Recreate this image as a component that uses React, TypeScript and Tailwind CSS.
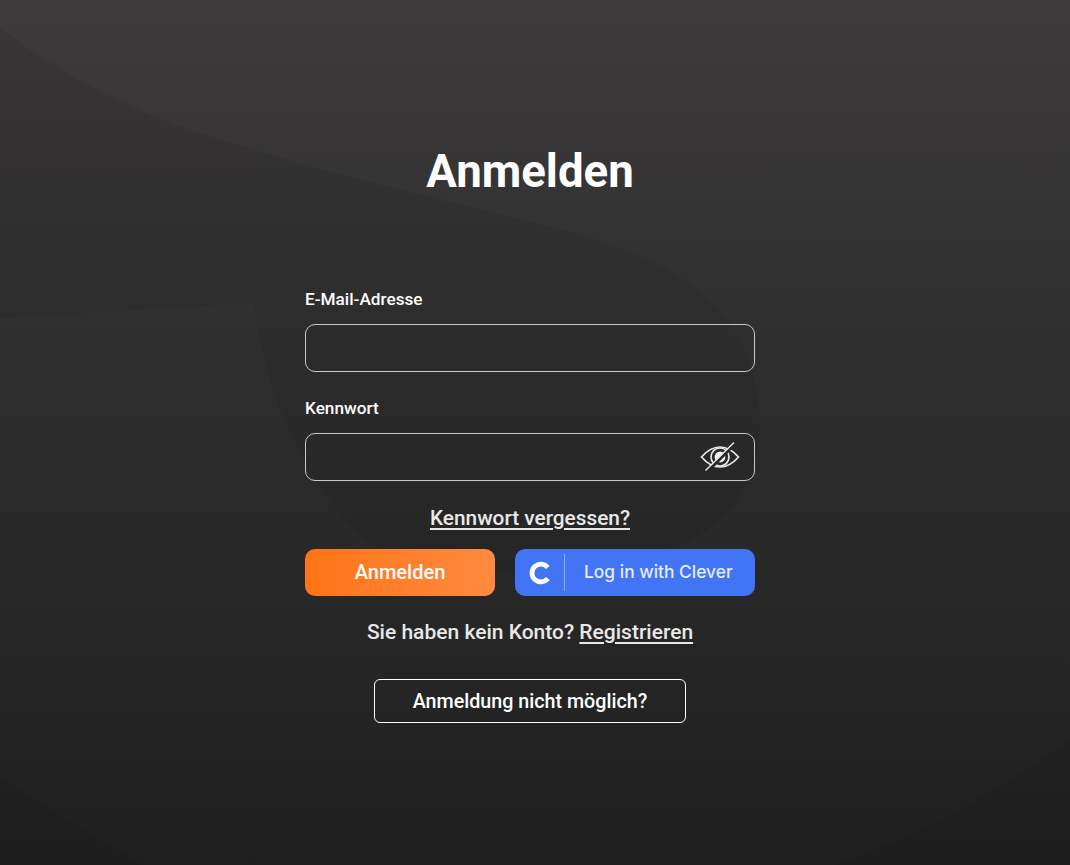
import { useState } from "react";

function EyeOff() {
  return (
    <svg width="40" height="32" viewBox="0 0 40 32" fill="none" stroke="#e8e8e8" strokeWidth="1.7">
      <path d="M1.5 16 C8 8.5 14 6 20 6 C26 6 32 8.5 38.5 16 C32 23.5 26 26 20 26 C14 26 8 23.5 1.5 16 Z" />
      <circle cx="20" cy="16" r="9" />
      <circle cx="20" cy="16" r="5.4" fill="#f2f2f2" stroke="none" />
      <path d="M31 7 L12 26" stroke="#2a292a" strokeWidth="3" />
      <path d="M34 1.5 L5.5 29.5" strokeWidth="1.4" />
    </svg>
  );
}

function CleverLogo() {
  return (
    <svg width="24" height="24" viewBox="0 0 24 24" fill="none">
      <path d="M20.8 6.4 A 8.9 8.9 0 1 0 20.8 17.6" stroke="#fff" strokeWidth="4.8" />
    </svg>
  );
}

function Backdrop() {
  return (
    <svg className="absolute inset-0 h-full w-full" viewBox="0 0 1070 865" preserveAspectRatio="none">
      <path
        d="M0 27 C60 75 130 110 200 133 C300 165 400 190 523 220 C590 237 670 255 720 310 C755 350 765 410 757 450 C750 490 725 520 703 533 C620 585 440 590 366 540 C310 490 265 400 254 303 L0 318 Z"
        fill="#000"
        fillOpacity="0.06"
      />
      <path d="M1070 740 C1000 790 930 830 836 865 L1070 865 Z" fill="#000" fillOpacity="0.06" />
      <path d="M0 777 C50 810 100 840 143 865 L0 865 Z" fill="#000" fillOpacity="0.06" />
    </svg>
  );
}

export default function App() {
  const [showPassword, setShowPassword] = useState(false);

  return (
    <div className="relative h-[865px] w-full overflow-hidden bg-gradient-to-b from-[#3c3a3b] to-[#1f1f1f] font-['Roboto',sans-serif] text-white">
      <Backdrop />
      <div className="relative flex w-[1060px] justify-center">
        <main className="flex w-[450px] flex-col">
          <h1 className="mt-[145px] h-[54px] text-center text-[45.6px] leading-[54px] font-bold">Anmelden</h1>
          <label className="mt-[89px] h-[22px] text-[17.2px] leading-[22px] font-medium">E-Mail-Adresse</label>
          <input className="mt-[14px] h-[48px] rounded-[10px] border border-[#c8c8cc] bg-transparent px-4 outline-none" type="email" />
          <label className="mt-[25px] h-[22px] text-[17.2px] leading-[22px] font-medium">Kennwort</label>
          <div className="relative mt-[14px] h-[48px]">
            <input
              className="h-full w-full rounded-[10px] border border-[#c8c8cc] bg-transparent px-4 outline-none"
              type={showPassword ? "text" : "password"}
            />
            <button className="absolute top-[8px] right-[15px]" onClick={() => setShowPassword(!showPassword)}>
              <EyeOff />
            </button>
          </div>
          <a className="mt-[24px] h-[26px] self-center text-[20.8px] leading-[26px] font-medium text-[#e8e8e8] underline underline-offset-3" href="#">
            Kennwort vergessen?
          </a>
          <div className="mt-[18px] flex gap-5">
            <button className="h-[47px] w-[190px] rounded-[10px] bg-gradient-to-r from-[#ff7413] to-[#ff8a3d] pb-[2px] text-[20px] font-medium">
              Anmelden
            </button>
            <button className="flex h-[47px] w-[240px] items-center rounded-[10px] bg-[#4274f6]">
              <span className="ml-[12px] flex w-[24px]">
                <CleverLogo />
              </span>
              <span className="ml-[13px] h-[37px] w-px bg-[#8fadf9]" />
              <span className="ml-[19px] font-['Inter',sans-serif] text-[17.4px] font-medium text-[#e6ecfd]">Log in with Clever</span>
            </button>
          </div>
          <p className="mt-[23px] h-[26px] text-center text-[21px] leading-[26px] font-medium text-[#e8e8e8]">
            Sie haben kein Konto?{" "}
            <a className="underline underline-offset-3" href="#">
              Registrieren
            </a>
          </p>
          <button className="mt-[34px] h-[44px] w-[312px] self-center rounded-[6px] border border-white pt-[1px] text-[19.7px] font-medium">
            Anmeldung nicht möglich?
          </button>
        </main>
      </div>
    </div>
  );
}
